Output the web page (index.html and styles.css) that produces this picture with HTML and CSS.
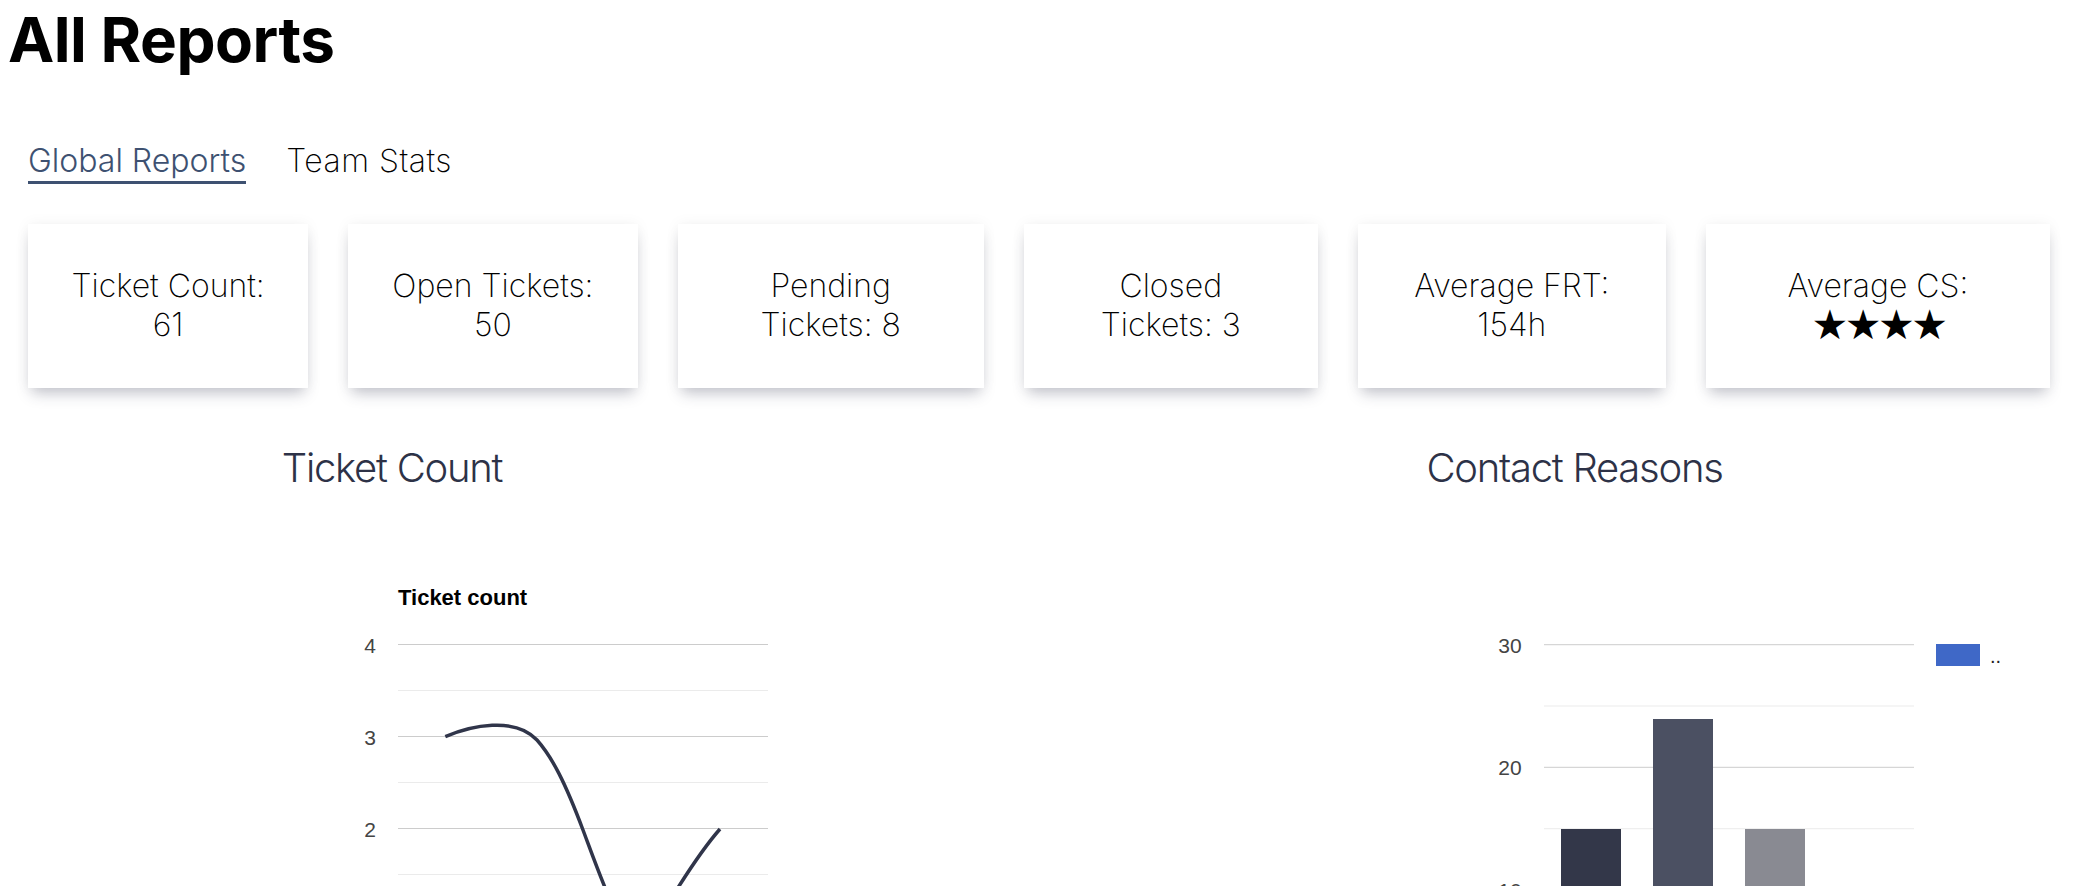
FILE: index.html
```html
<!DOCTYPE html>
<html lang="en">
<head>
<meta charset="utf-8">
<title>All Reports</title>
<link rel="stylesheet" href="styles.css">
</head>
<body>
<div class="page">
  <h1 class="page-title">All Reports</h1>
  <nav class="tabs">
    <a class="tab tab-active">Global Reports</a>
    <a class="tab">Team Stats</a>
  </nav>
  <div class="stats">
    <div class="stat-card stat-count">Ticket Count: 61</div>
    <div class="stat-card stat-open">Open Tickets: 50</div>
    <div class="stat-card stat-pending">Pending Tickets: 8</div>
    <div class="stat-card stat-closed">Closed Tickets: 3</div>
    <div class="stat-card stat-frt">Average FRT: 154h</div>
    <div class="stat-card stat-cs">Average CS: <span class="stars">★★★★</span></div>
  </div>
  <div class="charts">
    <section class="chart chart-left">
      <h2 class="chart-heading">Ticket Count</h2>
      <svg class="chart-svg" width="768" height="394" viewBox="0 0 768 394">
        <text class="chart-title" x="390" y="113">Ticket count</text>
        <rect class="grid-minor" x="390" y="198" width="370" height="1"/>
        <rect class="grid-minor" x="390" y="290" width="370" height="1"/>
        <rect class="grid-minor" x="390" y="382" width="370" height="1"/>
        <rect class="grid-major" x="390" y="152" width="370" height="1"/>
        <rect class="grid-major" x="390" y="244" width="370" height="1"/>
        <rect class="grid-major" x="390" y="336" width="370" height="1"/>
        <text class="axis-label" x="368" y="160.5">4</text>
        <text class="axis-label" x="368" y="252.5">3</text>
        <text class="axis-label" x="368" y="344.5">2</text>
        <path class="series-line" d="M437.3,244.7 C462,234 507,224 529,248 C544,265 557,290 575,338 C587,370 602,413 622,448 C642,458 667,388 712,337"/>
      </svg>
    </section>
    <section class="chart chart-right">
      <h2 class="chart-heading">Contact Reasons</h2>
      <svg class="chart-svg" width="995" height="394" viewBox="0 0 995 394">
        <rect class="grid-minor" x="467" y="213.5" width="370" height="1"/>
        <rect class="grid-minor" x="467" y="336.2" width="370" height="1"/>
        <rect class="grid-major" x="467" y="152.2" width="370" height="1"/>
        <rect class="grid-major" x="467" y="274.8" width="370" height="1"/>
        <text class="axis-label" x="444.7" y="160.7">30</text>
        <text class="axis-label" x="444.7" y="283.2">20</text>
        <text class="axis-label" x="444.7" y="405.5">10</text>
        <rect class="bar bar-1" x="484" y="337" width="60" height="120"/>
        <rect class="bar bar-2" x="576" y="227" width="60" height="230"/>
        <rect class="bar bar-3" x="668" y="337" width="60" height="120"/>
        <rect class="legend-swatch" x="859" y="152" width="44" height="22"/>
        <text class="legend-label" x="913" y="170.7">..</text>
      </svg>
    </section>
  </div>
</div>
</body>
</html>
```

FILE: styles.css
```css
html, body {
  margin: 0;
  padding: 0;
  background: #ffffff;
}

body {
  font-family: "Inter", "Noto Sans", sans-serif;
  color: #000;
  overflow: hidden;
}

.page {
  padding: 0 8px;
}

.page-title {
  margin: 2px 0 0 0;
  font-size: 62px;
  font-weight: 700;
  line-height: normal;
  letter-spacing: -0.5px;
  color: #000;
}

.tabs {
  display: flex;
  align-items: flex-start;
  gap: 40px;
  margin: 64px 0 0 20px;
}

.tab {
  font-size: 32px;
  line-height: normal;
  font-weight: 200;
  letter-spacing: 0.5px;
  color: #000;
  padding-bottom: 1px;
  border-bottom: 3px solid transparent;
  cursor: pointer;
}

.tab-active {
  font-weight: 300;
  letter-spacing: 0;
  color: #3e5171;
  border-bottom-color: #3e5171;
}

.stats {
  display: flex;
  gap: 40px;
  margin: 40px 22px 0 20px;
}

.stat-card {
  box-sizing: border-box;
  min-width: 0;
  background: #fff;
  padding: 42px 36px 44px;
  font-size: 32px;
  font-weight: 200;
  line-height: 39px;
  text-align: center;
  color: #000;
  box-shadow: 0 9px 14px -4px rgba(45, 50, 80, 0.28), 0 0 14px rgba(0, 0, 0, 0.05);
}

.stat-count { flex: 1 1 280px; }
.stat-open { flex: 1 1 289.5px; }
.stat-pending { flex: 1 1 306px; }
.stat-closed { flex: 1 1 294px; }
.stat-frt { flex: 1 1 308px; }
.stat-cs { flex: 1 1 344px; }

.stars {
  font-family: "DejaVu Sans", sans-serif;
  font-size: 41px;
  font-weight: 400;
  line-height: 38px;
  vertical-align: -3px;
  letter-spacing: -3.5px;
}

.charts {
  display: flex;
  justify-content: space-between;
  margin-top: 56px;
}

.chart-left {
  width: 768px;
}

.chart-right {
  width: 995px;
}

.chart-heading {
  margin: 0;
  font-size: 40px;
  font-weight: 300;
  line-height: 48px;
  letter-spacing: -1.25px;
  text-align: center;
  color: #2d3247;
}

.chart-svg {
  display: block;
  overflow: hidden;
}

.chart-title {
  font-family: "Liberation Sans", Arial, sans-serif;
  font-size: 22px;
  font-weight: 700;
  fill: #000;
}

.axis-label {
  font-family: "Liberation Sans", Arial, sans-serif;
  font-size: 21px;
  fill: #444;
  text-anchor: end;
}

.legend-label {
  font-family: "Liberation Sans", Arial, sans-serif;
  font-size: 20px;
  fill: #222;
}

.grid-major {
  fill: #cccccc;
}

.grid-minor {
  fill: #ebebeb;
}

.series-line {
  fill: none;
  stroke: #30354a;
  stroke-width: 3.5;
  stroke-linecap: butt;
}

.bar-1 { fill: #333749; }
.bar-2 { fill: #4b5062; }
.bar-3 { fill: #898a92; }

.legend-swatch {
  fill: #3f68c7;
}
```
